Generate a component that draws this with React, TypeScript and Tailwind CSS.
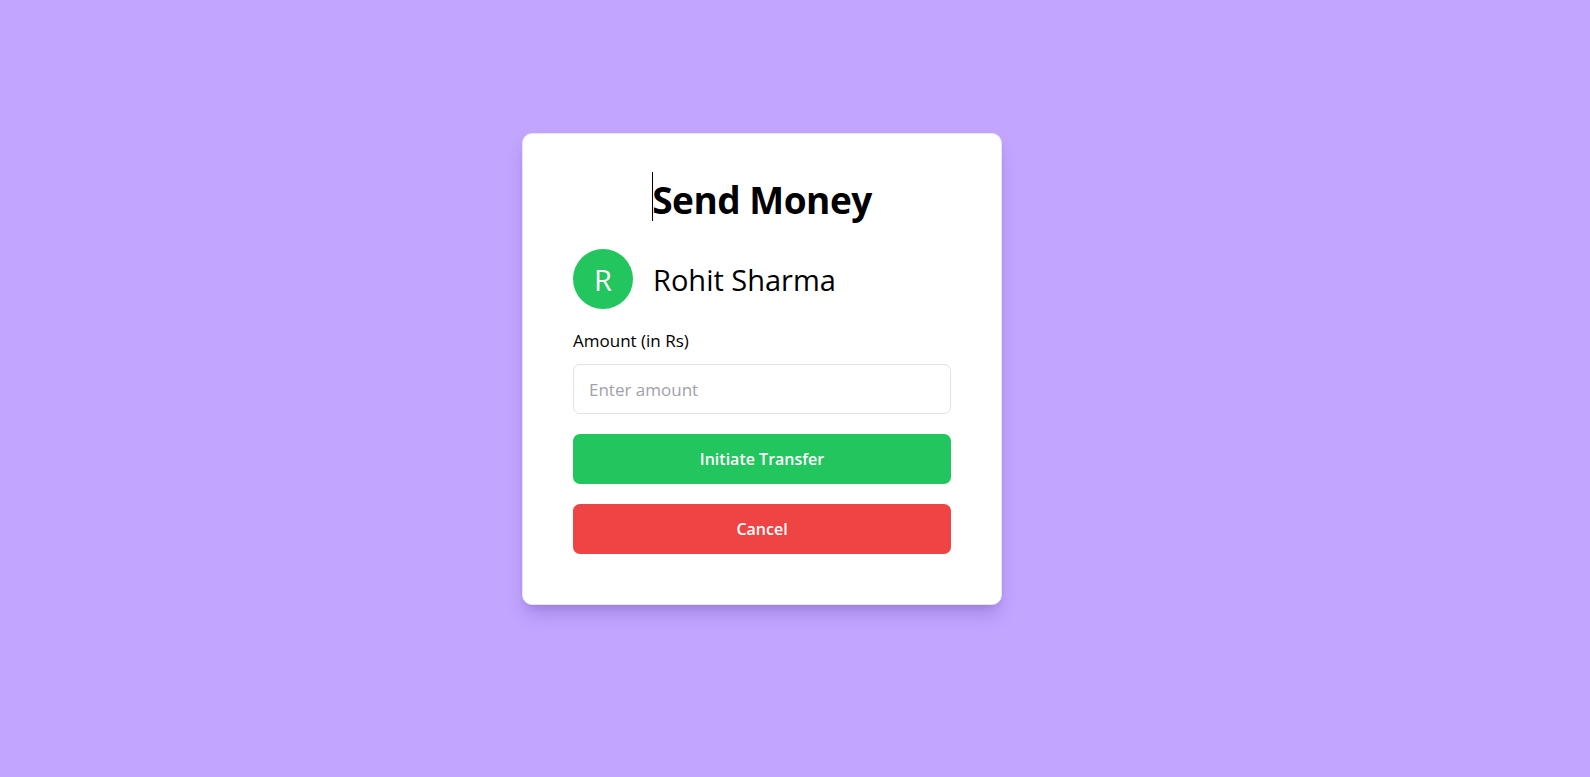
import React from "react";

export default function App() {
  return (
    <div
      className="min-h-screen w-full bg-[#c1a5fe] flex justify-center pr-[66px]"
      style={{ fontFamily: '"Open Sans", "Noto Sans", sans-serif' }}
    >
      <div className="flex flex-col pt-[133px]">
        <div className="w-[480px] h-[472px] bg-white rounded-[10px] shadow-[0_12px_18px_-4px_rgba(80,40,160,0.25),0_5px_8px_-5px_rgba(80,40,160,0.2)] border border-[#e5e7eb] px-[50px] box-border">
          <div className="flex justify-center pt-[38px]">
            <h2 className="relative text-[37px] leading-[49px] font-bold text-black tracking-[-0.5px]">
              <span className="absolute left-0 top-0 h-[49px] w-px bg-black" />
              <span className="relative top-[3px]">Send Money</span>
            </h2>
          </div>
          <div className="flex items-center gap-[20px] mt-[28px]">
            <div className="w-[60px] h-[60px] rounded-full bg-[#22c55e] flex items-center justify-center">
              <span className="text-[29px] text-white leading-none">R</span>
            </div>
            <h3 className="text-[29px] text-black font-normal leading-none">Rohit Sharma</h3>
          </div>
          <div className="mt-[22px] flex flex-col">
            <label className="text-[17px] font-medium text-black leading-[20px]" htmlFor="amount">
              Amount (in Rs)
            </label>
            <input
              id="amount"
              type="number"
              placeholder="Enter amount"
              className="mt-[13px] h-[50px] w-full rounded-[7px] border border-[#e2e2e2] bg-white px-[15px] text-[17px] placeholder:text-[#a1a1aa] outline-none"
            />
            <button className="mt-[20px] h-[50px] w-full rounded-[7px] bg-[#22c55e] text-white text-[16px] font-semibold">
              Initiate Transfer
            </button>
            <button className="mt-[20px] h-[50px] w-full rounded-[7px] bg-[#ef4444] text-white text-[16px] font-semibold">
              Cancel
            </button>
          </div>
        </div>
      </div>
    </div>
  );
}
